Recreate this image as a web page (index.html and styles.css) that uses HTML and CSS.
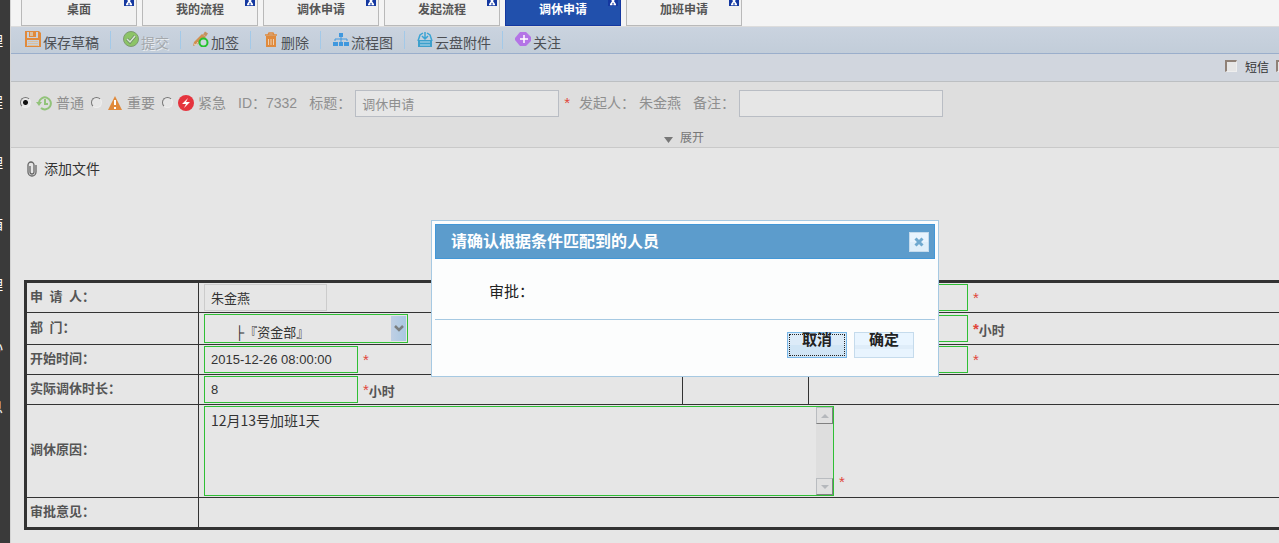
FILE: index.html
```html
<!DOCTYPE html>
<html lang="zh-CN">
<head>
<meta charset="utf-8">
<title>调休申请</title>
<link rel="stylesheet" href="styles.css">
</head>
<body>
<div class="app">
  <nav class="sidebar">
    <a href="#">理</a><a href="#">程</a><a href="#">理</a><a href="#">箱</a><a href="#">理</a><a href="#">心</a><a href="#">息</a>
  </nav>
  <main class="main">
    <div class="tabs">
      <div class="tab"><span>桌面</span><button class="tab-close" aria-label="关闭"><svg width="10" height="6" viewBox="0 0 10 6"><path d="M4 0L5 1.500L6 0M5 1L3 4M5 1L7 4M2 4.500H4.500M5.500 4.500H8" /></svg></button></div>
      <div class="tab"><span>我的流程</span><button class="tab-close" aria-label="关闭"><svg width="10" height="6" viewBox="0 0 10 6"><path d="M4 0L5 1.500L6 0M5 1L3 4M5 1L7 4M2 4.500H4.500M5.500 4.500H8" /></svg></button></div>
      <div class="tab"><span>调休申请</span><button class="tab-close" aria-label="关闭"><svg width="10" height="6" viewBox="0 0 10 6"><path d="M4 0L5 1.500L6 0M5 1L3 4M5 1L7 4M2 4.500H4.500M5.500 4.500H8" /></svg></button></div>
      <div class="tab"><span>发起流程</span><button class="tab-close" aria-label="关闭"><svg width="10" height="6" viewBox="0 0 10 6"><path d="M4 0L5 1.500L6 0M5 1L3 4M5 1L7 4M2 4.500H4.500M5.500 4.500H8" /></svg></button></div>
      <div class="tab active"><span>调休申请</span><button class="tab-close" aria-label="关闭"><svg width="10" height="6" viewBox="0 0 10 6"><path d="M4 0L5 1.500L6 0M5 1L3 4M5 1L7 4M2 4.500H4.500M5.500 4.500H8" /></svg></button></div>
      <div class="tab"><span>加班申请</span><button class="tab-close" aria-label="关闭"><svg width="10" height="6" viewBox="0 0 10 6"><path d="M4 0L5 1.500L6 0M5 1L3 4M5 1L7 4M2 4.500H4.500M5.500 4.500H8" /></svg></button></div>
    </div>

    <div class="toolbar">
      <button class="tool">
        <svg width="16" height="16" viewBox="0 0 16 16"><path fill="#e08a3c" fill-rule="evenodd" d="M0 0H14L16 2V16H0ZM2 1V7H13V1H11V6H4V1ZM2 9V15H14V9Z"/><path fill="#dcbf9d" d="M5 1H8V5H5ZM3 10H13V11H3ZM3 12H13V13H3ZM3 14H13V15H3Z"/></svg>保存草稿</button>
      <button class="tool" disabled>
        <svg width="16" height="16" viewBox="0 0 16 16"><circle cx="8" cy="8" r="7.500" fill="#8cc466" stroke="#7e9a72"/><path d="M4 8L7 11L12 5" fill="none" stroke="#6f8a68" stroke-width="3"/><path d="M4 8L7 11L12 5" fill="none" stroke="#d8e8d2" stroke-width="1.500"/></svg>提交</button>
      <button class="tool">
        <svg width="16" height="16" viewBox="0 0 16 16"><path d="M0 15L1 11L9 3L13 6L5 13Z" fill="#d18f50"/><path d="M11 2L14 4" stroke="#c39160" stroke-width="3.500"/><path d="M1 13L3 14L5 11" fill="none" stroke="#e8d8c8"/><circle cx="10.500" cy="11.500" r="4" fill="#cdd9e0" stroke="#25c32f" stroke-width="2"/></svg>加签</button>
      <button class="tool">
        <svg width="16" height="16" viewBox="0 0 16 16"><path d="M2 4H14M5 4L6 2H10L11 4" fill="none" stroke="#e08a3c" stroke-width="1.500"/><path d="M3 5H13V16H3Z" fill="#e08a3c"/><path d="M5.500 8V14M8 8V14M10.500 8V14" stroke="#efcfae"/></svg>删除</button>
      <button class="tool">
        <svg width="16" height="16" viewBox="0 0 16 16"><path d="M6 2H10V6H6ZM0 11H5V15H0ZM6 11H10V15H6ZM11 11H16V15H11Z" fill="#4098de"/><path d="M8 5V11M2 10V8H14V10" fill="none" stroke="#4098de"/></svg>流程图</button>
      <button class="tool">
        <svg width="16" height="16" viewBox="0 0 16 16"><path d="M6 2L3 4L1 10M10 2L13 4L15 10M8 1V7M5 5L8 8L11 5" fill="none" stroke="#3ba4d4" stroke-width="1.500"/><path d="M1 9H15V16H1Z" fill="#3da0cc"/><path d="M3 14H13M4 10V12M6 10V12M8 10V12M10 10V12M12 10V12" stroke="#bfdcec"/></svg>云盘附件</button>
      <button class="tool">
        <svg width="16" height="16" viewBox="0 0 16 16"><path d="M5 1H11L16 6V10L11 15H5L0 9V7Z" fill="#b474e6"/><path d="M9 4V12M5 8H13" stroke="#fff" stroke-width="1.500"/></svg>关注</button>
    </div>

    <div class="notify">
      <label class="check"><input type="checkbox">短信</label>
      <input type="checkbox" class="edge" aria-label="提醒">
    </div>

    <section class="summary">
      <div class="meta">
        <label class="level"><input type="radio" name="level" checked>
          <svg width="16" height="16" viewBox="0 0 16 16"><path d="M3 7A6 6 0 1 1 5 13M9 4V9H12" fill="none" stroke="#92c37a" stroke-width="2"/><path d="M0 7H6L3 11Z" fill="#92c37a"/></svg>普通</label>
        <label class="level"><input type="radio" name="level">
          <svg width="16" height="16" viewBox="0 0 16 16"><path d="M8 1L15 15H1Z" fill="#e08a3c"/><path d="M8 5V10M8 12V14" stroke="#fff" stroke-width="2"/></svg>重要</label>
        <label class="level"><input type="radio" name="level">
          <svg width="16" height="16" viewBox="0 0 16 16"><circle cx="8" cy="8" r="8" fill="#e5343e"/><path d="M10 3L4 9H8L6 13L12 7H8Z" fill="#fff"/></svg>紧急</label>
        <span class="field">ID：7332</span>
        <label class="field" for="title">标题：</label>
        <input id="title" class="box" value="调休申请">
        <span class="star">*</span>
        <span class="sender">发起人： 朱金燕</span>
        <label class="field" for="remark">备注：</label>
        <input id="remark" class="box">
      </div>
      <button class="expand"><svg width="9" height="6" viewBox="0 0 9 6"><path d="M0 0H9L4.500 6Z" fill="#777"/></svg>展开</button>
    </section>

    <a class="attach" href="#"><svg width="10" height="16" viewBox="0 0 10 16"><path d="M3 5V11A2 2 0 0 0 7 11V4A3 3 0 0 0 1 4V11A4 4 0 0 0 9 11V4" fill="none" stroke="#666" stroke-width="1.300"/></svg>添加文件</a>

    <div class="form-wrap">
      <table class="form">
        <colgroup><col class="c1"><col class="c2"><col class="c3"><col></colgroup>
        <tr class="r1">
          <th><label for="applicant">申&ensp;请&ensp;人：</label></th>
          <td><input id="applicant" class="in plain" value="朱金燕"></td>
          <td></td>
          <td><div class="cell"><input class="in" aria-label="申请日期"><span class="star">*</span></div></td>
        </tr>
        <tr class="r2">
          <th><label for="dept">部&ensp;门：</label></th>
          <td><div class="select"><select id="dept"><option>├『资金部』</option></select><span class="arrow"><svg width="10" height="8" viewBox="0 0 10 8"><path d="M1 1L5 5L9 1" fill="none" stroke="#7b7f80" stroke-width="2.500"/></svg></span></div></td>
          <td></td>
          <td><div class="cell"><input class="in" aria-label="时长"><span class="star strong">*</span><span class="unit">小时</span></div></td>
        </tr>
        <tr class="r3">
          <th><label for="start">开始时间：</label></th>
          <td><div class="cell"><input id="start" class="in" value="2015-12-26 08:00:00"><span class="star">*</span></div></td>
          <td></td>
          <td><div class="cell"><input class="in" aria-label="结束时间"><span class="star">*</span></div></td>
        </tr>
        <tr class="r3">
          <th><label for="hours">实际调休时长：</label></th>
          <td><div class="cell"><input id="hours" class="in" value="8"><span class="star">*</span><span class="unit">小时</span></div></td>
          <td></td>
          <td></td>
        </tr>
        <tr class="r5">
          <th><label for="reason">调休原因：</label></th>
          <td colspan="3"><div class="cell tall"><div class="area"><textarea id="reason">12月13号加班1天</textarea><div class="scroll"><button aria-label="向上"><svg width="8" height="4" viewBox="0 0 8 4"><path d="M0 4L4 0L8 4Z"/></svg></button><button aria-label="向下"><svg width="8" height="4" viewBox="0 0 8 4"><path d="M0 0H8L4 4Z"/></svg></button></div></div><span class="star">*</span></div></td>
        </tr>
        <tr class="r6"><th>审批意见：</th><td colspan="3"></td></tr>
      </table>
    </div>
  </main>

  <div class="dialog" role="dialog" aria-labelledby="dlg-title">
    <div class="dialog-head"><h2 id="dlg-title">请确认根据条件匹配到的人员</h2><button class="dialog-close" aria-label="关闭"><svg width="10" height="10" viewBox="0 0 10 10"><path d="M1.500 1.500L8.500 8.500M8.500 1.500L1.500 8.500" stroke="#6fa9cf" stroke-width="3"/></svg></button></div>
    <p class="dialog-body">审批：</p>
    <div class="dialog-foot"><button class="btn focus">取消</button><button class="btn">确定</button></div>
  </div>
</div>
</body>
</html>
```

FILE: styles.css
```css
* { box-sizing: border-box; }
body {
  margin: 0;
  background: #e6e6e6;
  color: #333;
  font: 14px/20px "Liberation Sans", "Noto Sans CJK SC", sans-serif;
}
button, input, select, textarea { margin: 0; padding: 0; font: inherit; color: inherit; border: 0; border-radius: 0; background: none; }
button { cursor: pointer; }
a { color: inherit; text-decoration: none; }
svg { display: block; flex: none; }

.app { position: relative; display: flex; min-height: 100vh; overflow: hidden; }
.sidebar {
  flex: none;
  width: 10px;
  padding: 31px 7px 0 0;
  display: flex;
  flex-direction: column;
  align-items: flex-end;
  gap: 41px;
  overflow: hidden;
  background: #3a3a3a;
  color: #fff;
}
.main { flex: 1; min-width: 0; border-left: 1px solid #d4d4d4; overflow: hidden; }

/* tabs */
.tabs { display: flex; gap: 5px; padding-left: 10px; background: #f4f4f4; border-bottom: 1px solid #dcdcdc; }
.tab {
  position: relative;
  flex: none;
  width: 116px;
  height: 26px;
  border: 1px solid #b9b9b9;
  border-top: 0;
  background: #f1f1f1;
  color: #555;
  font-size: 12px;
  font-weight: bold;
  text-align: center;
}
.tab.active { background: #2150ac; border-color: #1438a0; color: #fff; }
.tab-close { position: absolute; top: 0; right: 2px; background: #1438a0; }
.tab-close svg { fill: none; stroke: #fff; stroke-width: 1.500; }

/* toolbar */
.toolbar { display: flex; align-items: center; height: 27px; background: linear-gradient(#cad3df, #c2cdd9); border-bottom: 1px solid #9aaecb; padding-left: 2px; }
.tool { flex: none; display: flex; gap: 2px; height: 18px; padding: 0 11px 0 12px; color: #4c4f54; white-space: nowrap; line-height: 24px; }
.tool + .tool { border-left: 1px solid #a3c9e8; }
.tool:disabled { color: #a4a8ac; text-shadow: 1px 1px 0 #e8ecf0; }

.notify { display: flex; justify-content: flex-end; align-items: center; gap: 7px; height: 28px; background: #d1d6de; border-bottom: 1px solid #bcbfc2; }
.check { display: flex; align-items: center; gap: 8px; font-size: 12px; }
.notify input { appearance: none; flex: none; width: 12px; height: 12px; margin-bottom: 4px; border: 1px solid #eee; border-top: 2px solid #8f8177; border-left: 2px solid #8f8177; background: #e6e6e6; }
.notify .edge { margin-right: -9px; }

/* summary */
.summary { background: #dedede; border-bottom: 1px solid #c9c9c9; color: #8f8f8f; }
.meta { display: flex; align-items: center; height: 42px; padding-left: 9px; white-space: nowrap; }
.level { display: flex; align-items: center; gap: 5px; margin-right: 6px; }
.level svg { margin-right: -1px; }
.level input { appearance: none; flex: none; width: 11px; height: 11px; margin-bottom: 2px; border: 1px solid #eee; border-top-color: #777; border-left-color: #777; border-radius: 50%; background: #e6e6e6; }
.level input:checked { background: radial-gradient(circle, #111 2px, #e6e6e6 3px); }
.level + .level { margin-left: 1px; }
.field { margin-left: 6px; margin-right: 6px; }
.meta label.field { margin-right: 4px; }
.box { width: 204px; height: 27px; padding: 0 6px; border: 1px solid #b9bdc4; background: #e6e6e6; font-size: 13px; flex: none; }
.star { color: #e0453a; padding-left: 5px; font-size: 15px; }
.star.strong { font-weight: bold; }
.sender { margin: 0 6px 0 9px; }
.expand { display: flex; align-items: center; justify-content: center; gap: 7px; width: 100%; height: 23px; padding: 5px 0 0 78px; font-size: 12px; color: #777; }
.expand svg { margin-top: 4px; }

.attach { display: inline-flex; align-items: center; gap: 7px; height: 42px; padding-left: 16px; }

/* form table */
.form-wrap { margin: 90px -20px 0 13px; }
.form { width: 100%; table-layout: fixed; border: 3px solid #333; border-spacing: 0; font-size: 13px; }
.c1 { width: 172px; }
.c2 { width: 484px; }
.c3 { width: 126px; }
.form th, .form td { padding: 0 0 0 5px; border-bottom: 1px solid #333; border-right: 1px solid #333; }
.form th { padding: 0 0 2px 3px; text-align: left; color: #555; }
.form tr:last-child > * { border-bottom: 0; }
.r1, .r3 { height: 30px; }
.r2 { height: 32px; }
.r5 { height: 93px; }
.r6 { height: 29px; }
.cell { display: flex; align-items: center; }
.cell.tall { align-items: flex-end; }
.cell.tall .star { padding-bottom: 4px; }
.in { display: block; width: 154px; height: 27px; padding: 0 6px; border: 1px solid #2fbf35; }
.in.plain { width: 123px; border-color: #ccc; }
.unit { font-weight: bold; color: #555; padding-top: 4px; }
.select { position: relative; width: 204px; height: 29px; border: 1px solid #2fbf35; }
.select select { appearance: none; width: 100%; height: 100%; padding: 8px 0 0 30px; }
.arrow { position: absolute; top: 1px; right: 1px; bottom: 1px; width: 15px; display: flex; align-items: center; justify-content: center; background: linear-gradient(90deg, #bfcfe4, #a9c8e2); pointer-events: none; }
.area { display: flex; width: 630px; height: 90px; border: 1px solid #2fbf35; }
.area textarea { flex: 1; resize: none; padding: 3px 6px; outline: 0; overflow: hidden; font: 14px/20px "Noto Sans CJK SC", sans-serif; }
.scroll { display: flex; flex-direction: column; justify-content: space-between; width: 17px; background: #dedede; }
.scroll button { display: flex; align-items: center; justify-content: center; height: 17px; border: 1px solid #b9bcc0; border-right: 1px solid #808080; border-bottom: 1px solid #808080; background: #e0e0e0; }
.scroll svg { fill: #b5b8bc; }

/* dialog */
.dialog { position: absolute; top: 220px; left: 431px; width: 508px; padding: 3px; border: 1px solid #a6c9e2; background: #fcfdfd; color: #222; }
.dialog-head { display: flex; align-items: center; justify-content: space-between; height: 35px; padding: 0 5px 0 15px; border: 1px solid #4297d7; background: #5c9ccc; color: #fff; }
.dialog-head h2 { margin: 0; font-size: 16px; line-height: 20px; }
.dialog-close { display: flex; align-items: center; justify-content: center; width: 20px; height: 20px; border: 1px solid #c5dbec; background: linear-gradient(#e8f4fe 50%, #dfeffa 50%); }
.dialog-body { margin: 0; padding: 23px 54px 17px; font-size: 15px; }
.dialog-foot { display: flex; justify-content: flex-end; gap: 7px; padding: 12px 21px 15px; border-top: 1px solid #a6c9e2; }
.btn { width: 60px; height: 26px; padding-bottom: 10px; border: 1px solid #c5dbec; background: linear-gradient(#e9f5ff 50%, #dfedf9 50%, #dfedf9 66%, #e8f4fe 66%); font-size: 15px; font-weight: bold; line-height: 14px; }
.btn.focus { border-color: #79b7e7; outline: 1px dotted #222; outline-offset: -3px; background: linear-gradient(#dcebf8 50%, #d0e5f5 50%); }
```
